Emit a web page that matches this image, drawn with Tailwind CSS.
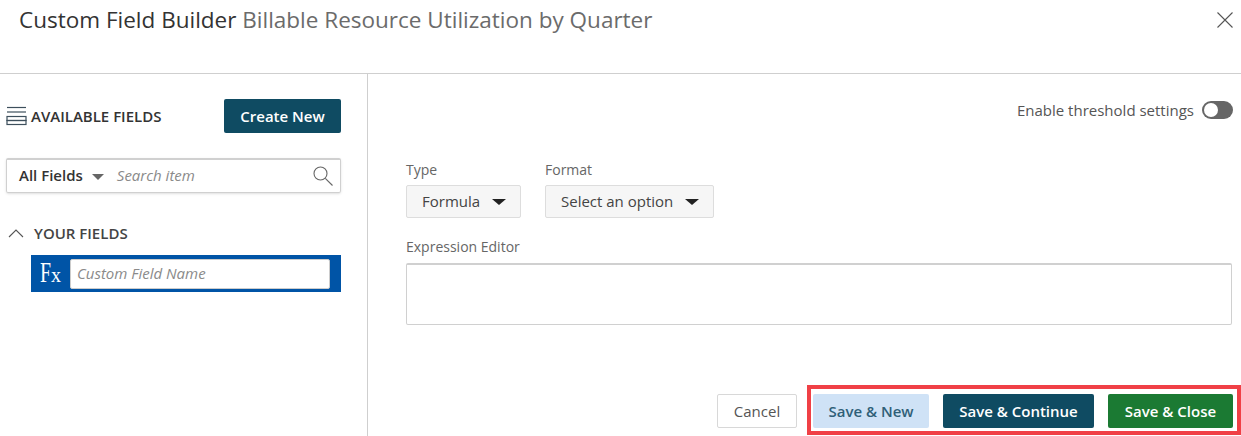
<!DOCTYPE html>
<html lang="en">
<head>
  <meta charset="UTF-8" />
  <title>Custom Field Builder</title>
  <script src="https://cdn.jsdelivr.net/npm/@tailwindcss/browser@4"></script>
</head>
<body class="bg-white font-['Open_Sans',sans-serif] w-[1241px] h-[436px] overflow-hidden relative text-[#333]">
  <!-- Header -->
  <header class="h-[74px] border-b border-[#cfcfcf] flex justify-between pl-[19px] pr-[8px]">
    <h1 class="text-[22.5px] leading-[39px]">Custom Field Builder <span class="text-[#6b6b6b]">Billable Resource Utilization by Quarter</span></h1>
    <button class="w-[16px] h-[16px] mt-[12px]">
      <svg viewBox="0 0 16 16" class="w-[16px] h-[16px]" fill="none" stroke="#555" stroke-width="1.1"><path d="M0.5 0.5 15.5 15.5M15.5 0.5 0.5 15.5" /></svg>
    </button>
  </header>

  <div class="flex h-[362px]">
    <!-- Left panel -->
    <aside class="w-[368px] border-r border-[#cfcfcf] pt-[25px] pl-[6px] pr-[26px]">
      <div class="flex items-center justify-between h-[34px]">
        <div class="flex items-center gap-[4px]">
          <svg width="21" height="22" viewBox="0 0 21 22" fill="none" stroke="#3d4f5c" stroke-width="1.2">
            <path d="M1 2.5H20" />
            <path d="M1 7H20" />
            <rect x="1" y="11.5" width="19" height="4" />
            <rect x="1" y="15.5" width="19" height="4" />
          </svg>
          <span class="text-[15px] font-semibold leading-[20px] -mt-[1px] text-[#333]">AVAILABLE FIELDS</span>
        </div>
        <button class="w-[117px] h-[34px] bg-[#0f4b62] rounded-[2px] text-white text-[15px] font-semibold">Create New</button>
      </div>

      <div class="mt-[25px] h-[35px] border border-[#d0d0d0] border-t-2 rounded-[2px] flex items-center pl-[12px] pr-[6px] shadow-sm">
        <span class="text-[15px] leading-[20px] -mt-[2px] font-semibold text-[#333]">All Fields</span>
        <span class="ml-[9px] mt-[2px] w-0 h-0 border-x-[6px] border-x-transparent border-t-[6px] border-t-[#666]"></span>
        <span class="ml-[13px] text-[15px] leading-[20px] -mt-[2px] italic text-[#8a8a8a] flex-1">Search item</span>
        <svg width="22" height="22" viewBox="0 0 22 22" fill="none" stroke="#666" stroke-width="1.1">
          <circle cx="8.5" cy="8.5" r="6.5" />
          <path d="M13.3 13.3 20.5 20.5" />
        </svg>
      </div>

      <div class="mt-[31px] flex items-center h-[18px]">
        <svg width="16" height="10" viewBox="0 0 16 10" fill="none" stroke="#555" stroke-width="1.1" class="ml-[2px]"><path d="M1 9 8 2 15 9" /></svg>
        <span class="ml-[10px] text-[15px] font-semibold text-[#444]">YOUR FIELDS</span>
      </div>

      <div class="mt-[13px] ml-[25px] h-[37px] bg-[#0054a6] flex items-center pl-[9px] pr-[11px]">
        <span class="w-[21px] -mt-[3px] flex items-baseline font-['Liberation_Serif',serif] text-white leading-none">
          <span class="inline-block w-[11px] text-[30px] origin-left scale-x-[0.66]">F</span><span class="text-[20px]">x</span>
        </span>
        <input class="ml-[9px] flex-1 h-[30px] min-w-0 bg-white rounded-[2px] border border-[#ccc] px-[6px] pb-[2px] text-[15px] italic placeholder:text-[#8a8a8a]" placeholder="Custom Field Name" />
      </div>
    </aside>

    <!-- Right panel -->
    <main class="flex-1 pl-[38px] pr-[8px]">
      <div class="flex justify-end items-center gap-[8px] h-[18px] mt-[27px]">
        <span class="text-[15px] text-[#555]">Enable threshold settings</span>
        <span class="w-[31px] h-[18px] rounded-full bg-[#666] relative flex items-center pl-[2px]">
          <span class="w-[14px] h-[14px] rounded-full bg-white"></span>
        </span>
      </div>

      <div class="flex gap-[24px] mt-[42px]">
        <div>
          <label class="block text-[14px] leading-[18px] text-[#666]">Type</label>
          <div class="mt-[6px] w-[115px] h-[33px] bg-[#f6f6f6] border border-[#ddd] rounded-[2px] flex items-center pl-[15px]">
            <span class="text-[15px] text-[#444]">Formula</span>
            <span class="ml-[12px] w-0 h-0 border-x-[7px] border-x-transparent border-t-[6px] border-t-[#222]"></span>
          </div>
        </div>
        <div>
          <label class="block text-[14px] leading-[18px] text-[#666]">Format</label>
          <div class="mt-[6px] w-[169px] h-[33px] bg-[#f6f6f6] border border-[#ddd] rounded-[2px] flex items-center pl-[15px]">
            <span class="text-[15px] text-[#444]">Select an option</span>
            <span class="ml-[12px] w-0 h-0 border-x-[7px] border-x-transparent border-t-[6px] border-t-[#222]"></span>
          </div>
        </div>
      </div>

      <label class="block mt-[20px] text-[14px] leading-[18px] text-[#666]">Expression Editor</label>
      <div class="mt-[7px] mr-[1px] h-[62px] border border-[#d0d0d0] border-t-2 rounded-[2px]"></div>

      <div class="mt-[69px] flex justify-end">
        <button class="w-[80px] h-[34px] bg-white border border-[#d8d8d8] rounded-[2px] text-[15px] text-[#555]">Cancel</button>
        <button class="ml-[16px] w-[116px] h-[34px] bg-[#cfe2f6] rounded-[2px] text-[15px] font-semibold text-[#2f5f78]">Save &amp; New</button>
        <button class="ml-[14px] w-[151px] h-[34px] bg-[#0f4b62] rounded-[2px] text-[15px] font-semibold text-white">Save &amp; Continue</button>
        <button class="ml-[14px] w-[125px] h-[34px] bg-[#1b7a33] rounded-[2px] text-[15px] font-semibold text-white">Save &amp; Close</button>
      </div>
    </main>
  </div>

  <!-- Red annotation -->
  <div class="absolute left-[807px] top-[385px] w-[434px] h-[50px] border-[4px] border-[#f04046] pointer-events-none"></div>
</body>
</html>
